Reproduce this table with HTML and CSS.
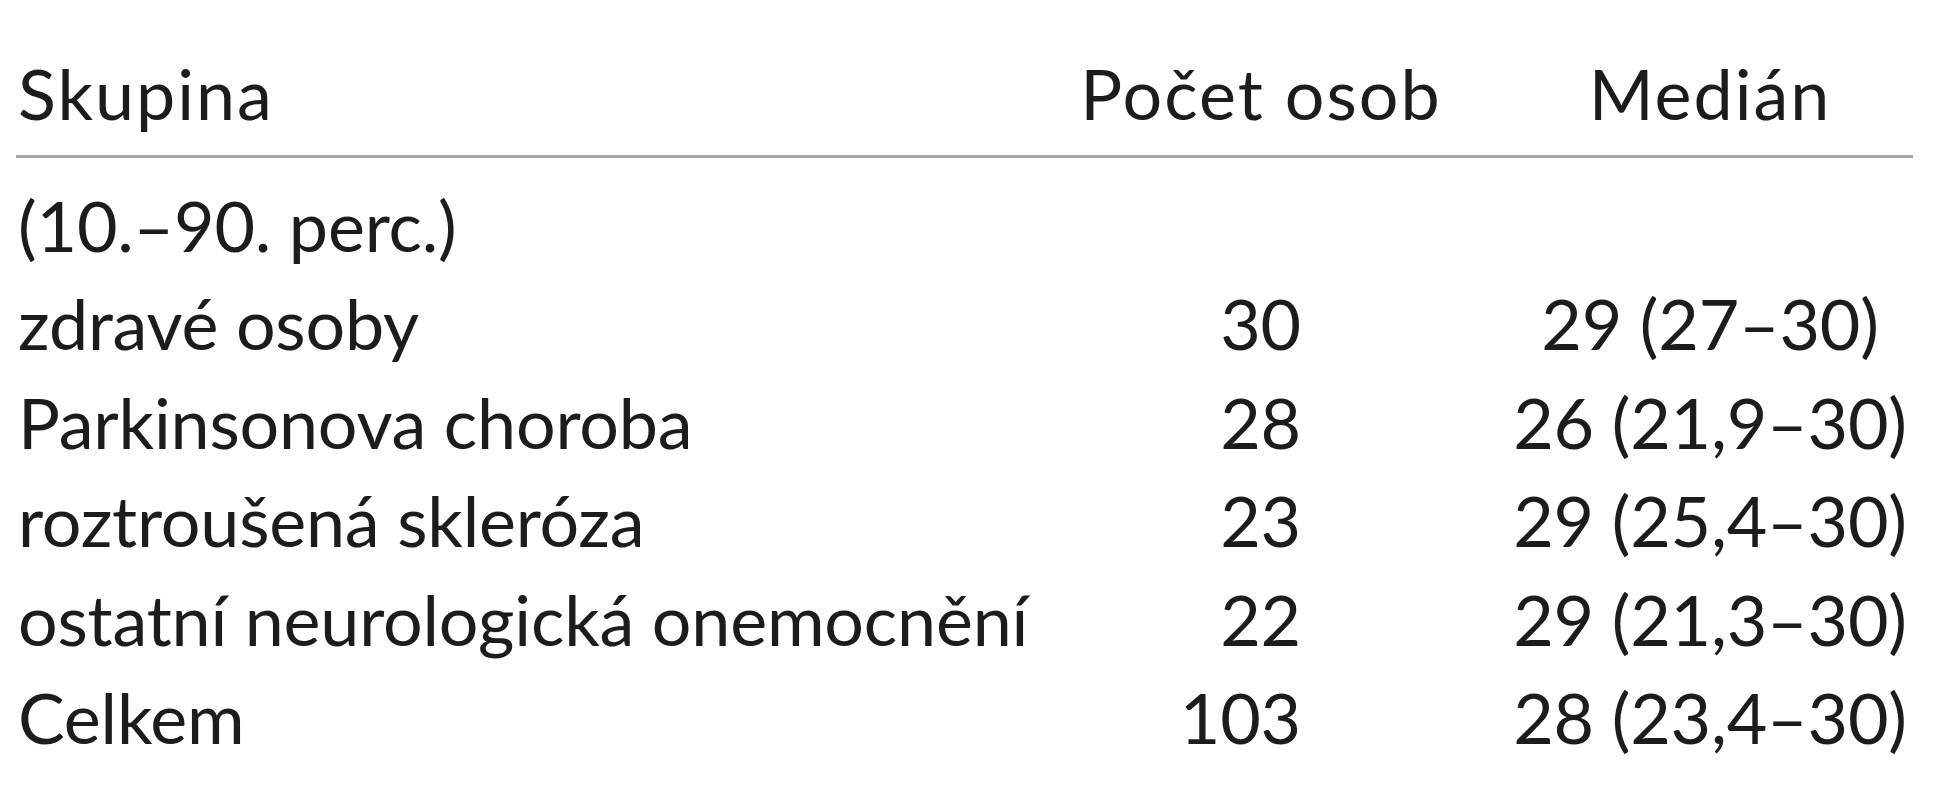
FILE: index.html
```html
<!DOCTYPE html>
<html lang="cs">
<head>
<meta charset="utf-8">
<title>Skupina</title>
<link rel="stylesheet" href="styles.css">
</head>
<body>
<div class="table">
  <div class="row head">
    <div class="c1">Skupina</div>
    <div class="c2">Počet osob</div>
    <div class="c3">Medián</div>
  </div>
  <div class="body">
    <div class="row">
      <div class="c1">(10.–90. perc.)</div>
      <div class="c2"></div>
      <div class="c3"></div>
    </div>
    <div class="row">
      <div class="c1">zdravé osoby</div>
      <div class="c2 num">30</div>
      <div class="c3">29 (27–30)</div>
    </div>
    <div class="row">
      <div class="c1">Parkinsonova choroba</div>
      <div class="c2 num">28</div>
      <div class="c3">26 (21,9–30)</div>
    </div>
    <div class="row">
      <div class="c1">roztroušená skleróza</div>
      <div class="c2 num">23</div>
      <div class="c3">29 (25,4–30)</div>
    </div>
    <div class="row">
      <div class="c1">ostatní neurologická onemocnění</div>
      <div class="c2 num">22</div>
      <div class="c3">29 (21,3–30)</div>
    </div>
    <div class="row">
      <div class="c1">Celkem</div>
      <div class="c2 num">103</div>
      <div class="c3">28 (23,4–30)</div>
    </div>
  </div>
</div>
</body>
</html>
```
FILE: styles.css
```css
html, body {
  margin: 0;
  padding: 0;
  background: #ffffff;
}
body {
  font-family: "Lato", "Open Sans", "DejaVu Sans", sans-serif;
  font-size: 70px;
  color: #1c1c1c;
}
.table {
  width: 1897px;
  margin-left: 16px;
  padding-top: 44px;
}
.row {
  display: grid;
  grid-template-columns: 1040px 410px 447px;
  line-height: 98.4px;
  white-space: nowrap;
}
.head {
  line-height: 98px;
  letter-spacing: 2px;
  padding-bottom: 13px;
  border-bottom: 3px solid #a6a6a6;
}
.body {
  padding-top: 18px;
  letter-spacing: -0.2px;
}
.c1 {
  padding-left: 2px;
}
.c2 {
  text-align: center;
}
.c2.num {
  text-align: right;
  padding-right: 165px;
}
.c3 {
  text-align: center;
  padding-left: 41px;
}
```
